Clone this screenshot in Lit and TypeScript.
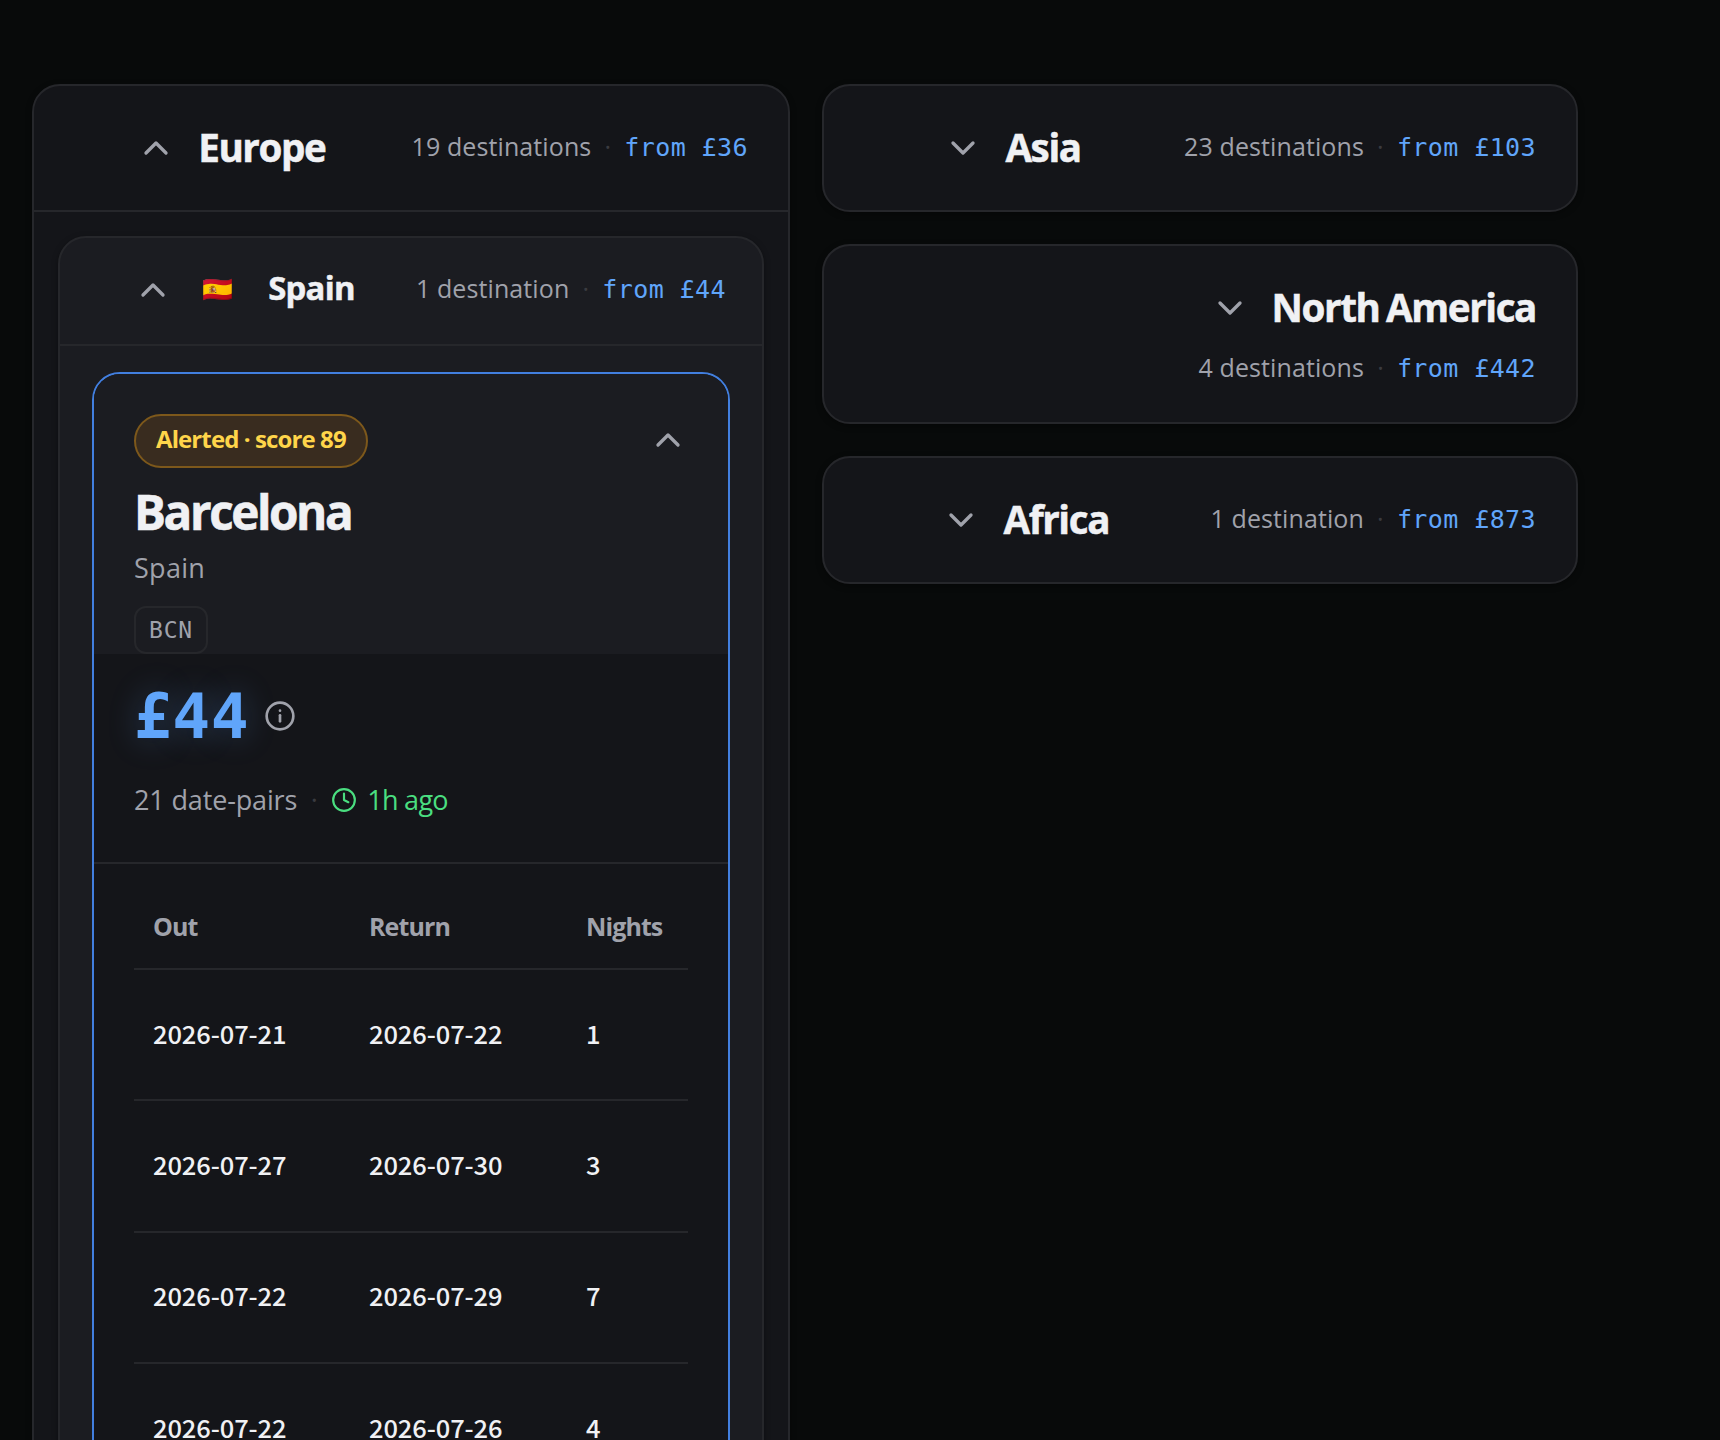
import { LitElement, html, css, svg, nothing } from 'lit';
import { customElement, property } from 'lit/decorators.js';

interface Region {
  name: string;
  count: number;
  from: number;
}

interface DatePair {
  out: string;
  back: string;
  nights: number;
}

const REGIONS: Region[] = [
  { name: 'Asia', count: 23, from: 103 },
  { name: 'North America', count: 4, from: 442 },
  { name: 'Africa', count: 1, from: 873 },
];

const DATE_PAIRS: DatePair[] = [
  { out: '2026-07-21', back: '2026-07-22', nights: 1 },
  { out: '2026-07-27', back: '2026-07-30', nights: 3 },
  { out: '2026-07-22', back: '2026-07-29', nights: 7 },
  { out: '2026-07-22', back: '2026-07-26', nights: 4 },
];

const chevron = (open: boolean) => html`
  <svg class="chevron" viewBox="0 0 24 24" aria-hidden="true">
    ${open ? svg`<path d="m18 15-6-6-6 6" />` : svg`<path d="m6 9 6 6 6-6" />`}
  </svg>
`;

const iconStyles = css`
  svg {
    display: block;
    flex: none;
    fill: none;
    stroke: currentColor;
    stroke-width: 2;
    stroke-linecap: round;
    stroke-linejoin: round;
  }

  .chevron {
    width: 40px;
    height: 40px;
    color: var(--color-text-secondary);
  }
`;

/**
 * Collapsible group header and body
 *
 * @element fare-group
 * @slot - Group content, shown when open
 */
@customElement('fare-group')
export class FareGroup extends LitElement {
  @property() name = '';
  @property() flag = '';
  @property({ type: Number }) count = 0;
  @property({ type: Number }) from = 0;
  @property({ type: Boolean }) open = false;
  @property({ type: Boolean, reflect: true }) nested = false;

  static styles = [
    iconStyles,
    css`
      :host {
        display: block;
        box-sizing: border-box;
        background: var(--color-surface);
        border: 2px solid var(--color-stroke);
        border-radius: 28px;
        box-shadow: 0 2px 6px rgba(0, 0, 0, 0.35);
      }

      :host([nested]) {
        background: var(--color-surface-raised);
      }

      .header {
        display: flex;
        flex-wrap: wrap;
        align-items: center;
        align-content: flex-start;
        gap: 21px 24px;
        min-height: 124px;
        box-sizing: border-box;
        padding: 37px 40px;
      }

      .title,
      .meta {
        display: flex;
        align-items: center;
        margin-left: auto;
        white-space: nowrap;
      }

      .title {
        gap: 22px;
        height: 48px;
      }

      .title .chevron {
        margin-top: 2px;
      }

      h2 {
        margin: 0;
        font-size: 38.6px;
        font-weight: 700;
        line-height: 48px;
        letter-spacing: -1.4px;
        word-spacing: -2px;
        color: var(--color-text-primary);
        -webkit-text-stroke: 0.5px currentColor;
      }

      .flag {
        width: 42px;
        margin: -4px 0 0 7px;
        font-size: 25px;
        line-height: 40px;
      }

      .meta {
        align-items: baseline;
        gap: 12px;
        height: 33px;
        font-size: 25px;
        line-height: 31px;
        color: var(--color-text-secondary);
      }

      .count {
        letter-spacing: 0.1px;
      }

      .dot {
        width: 9px;
        text-align: center;
        color: var(--color-text-faint);
      }

      .from {
        font-family: 'DejaVu Sans Mono', monospace;
        letter-spacing: 0.4px;
        color: var(--color-accent);
      }

      .body {
        padding: 24px 24px 0;
        border-top: 2px solid var(--color-stroke);
      }

      :host([nested]) .header {
        min-height: 106px;
        padding: 28px 36px;
      }

      :host([nested]) .title .chevron {
        margin-top: 0;
      }

      :host([nested]) h2 {
        margin: -4px 0 0 2px;
        font-size: 32.8px;
        letter-spacing: -0.7px;
      }

      :host([nested]) .meta {
        line-height: 29px;
      }

      :host([nested]) .body {
        padding: 26px 32px 0;
      }
    `,
  ];

  render() {
    return html`
      <div class="header">
        <div class="title">
          ${chevron(this.open)}
          ${this.flag ? html`<span class="flag">${this.flag}</span>` : nothing}
          <h2>${this.name}</h2>
        </div>
        <div class="meta">
          <span class="count">${this.count} ${this.count === 1 ? 'destination' : 'destinations'}</span>
          <span class="dot">·</span>
          <span class="from">from £${this.from}</span>
        </div>
      </div>
      ${this.open ? html`<div class="body"><slot></slot></div>` : nothing}
    `;
  }
}

/**
 * Destination card with its date pairs
 *
 * @element fare-card
 */
@customElement('fare-card')
export class FareCard extends LitElement {
  static styles = [
    iconStyles,
    css`
      :host {
        display: block;
        height: 1200px;
        box-sizing: border-box;
        overflow: hidden;
        background: var(--color-surface);
        border: 2px solid var(--color-stroke-active);
        border-radius: 28px;
      }

      .top {
        display: flex;
        justify-content: space-between;
        align-items: flex-start;
        height: 280px;
        box-sizing: border-box;
        padding: 40px 40px 0;
        background: var(--color-surface-raised);
      }

      .top .chevron {
        margin-top: 6px;
      }

      .place {
        display: flex;
        flex-direction: column;
        align-items: flex-start;
      }

      .badge {
        height: 54px;
        box-sizing: border-box;
        padding: 0 20px;
        font-size: 24px;
        font-weight: 700;
        line-height: 46px;
        letter-spacing: -0.9px;
        white-space: nowrap;
        color: #ffd54a;
        background: #392c1f;
        border: 2px solid #7d581b;
        border-radius: 27px;
      }

      h3 {
        margin: 14px 0 0;
        font-size: 47.6px;
        font-weight: 700;
        line-height: 60px;
        letter-spacing: -2.4px;
        color: var(--color-text-primary);
        -webkit-text-stroke: 0.6px currentColor;
      }

      .country {
        font-size: 27px;
        line-height: 36px;
        margin-top: 8px;
        letter-spacing: 0.3px;
        color: var(--color-text-secondary);
      }

      .code {
        height: 48px;
        box-sizing: border-box;
        margin-top: 20px;
        padding: 0 13px;
        font-family: 'DejaVu Sans Mono', monospace;
        font-size: 23px;
        line-height: 44px;
        letter-spacing: 0.8px;
        color: var(--color-text-secondary);
        border: 2px solid var(--color-stroke);
        border-radius: 12px;
      }

      .summary {
        height: 210px;
        box-sizing: border-box;
        padding: 20px 40px 0;
        border-bottom: 2px solid var(--color-stroke);
      }

      .price {
        display: flex;
        align-items: center;
        gap: 15px;
        height: 84px;
        color: var(--color-text-secondary);
      }

      .price strong {
        font-family: 'DejaVu Sans Mono', monospace;
        font-size: 63px;
        letter-spacing: 0.4px;
        line-height: 84px;
        margin-top: 2px;
        color: var(--color-accent);
        text-shadow: 0 0 32px rgba(96, 165, 250, 0.28);
      }

      .price svg {
        width: 32px;
        height: 32px;
      }

      .facts {
        display: flex;
        align-items: center;
        gap: 12px;
        height: 40px;
        margin-top: 22px;
        font-size: 27px;
        line-height: 36px;
        letter-spacing: -0.15px;
        color: var(--color-text-secondary);
      }

      .dot {
        width: 10px;
        text-align: center;
        color: var(--color-text-faint);
      }

      .age {
        display: flex;
        align-items: center;
        gap: 10px;
        letter-spacing: -0.7px;
        color: var(--color-fresh);
      }

      .age svg {
        width: 26px;
        height: 26px;
      }

      .dates {
        padding: 24px 40px;
      }

      table {
        width: 554px;
        table-layout: fixed;
        border-spacing: 0;
      }

      th,
      td {
        padding: 0 17px 0 19px;
        text-align: left;
        border-bottom: 2px solid var(--color-stroke);
      }

      th:first-child {
        width: 180px;
      }

      th:nth-child(2) {
        width: 181px;
      }

      th {
        height: 76px;
        padding-bottom: 4px;
        font-size: 25px;
        font-weight: 700;
        letter-spacing: -0.9px;
        color: var(--color-text-secondary);
      }

      td {
        height: 125.4px;
        padding-bottom: 4px;
        font-family: 'Noto Sans CJK SC', sans-serif;
        font-size: 25.5px;
        font-weight: 500;
        line-height: 40px;
        letter-spacing: -0.1px;
        color: var(--color-text-primary);
      }
    `,
  ];

  render() {
    return html`
      <div class="top">
        <div class="place">
          <span class="badge">Alerted · score 89</span>
          <h3>Barcelona</h3>
          <span class="country">Spain</span>
          <span class="code">BCN</span>
        </div>
        ${chevron(true)}
      </div>
      <div class="summary">
        <div class="price">
          <strong>£44</strong>
          <svg viewBox="0 0 24 24" aria-hidden="true">
            <circle cx="12" cy="12" r="10" />
            <path d="M12 16v-4.5" />
            <path d="M12 8h.01" />
          </svg>
        </div>
        <div class="facts">
          <span>21 date-pairs</span>
          <span class="dot">·</span>
          <span class="age">
            <svg viewBox="0 0 24 24" aria-hidden="true">
              <circle cx="12" cy="12" r="10" />
              <path d="M12 6v6l4 2" />
            </svg>
            <span>1h ago</span>
          </span>
        </div>
      </div>
      <div class="dates">
        <table>
          <thead>
            <tr><th>Out</th><th>Return</th><th>Nights</th></tr>
          </thead>
          <tbody>
            ${DATE_PAIRS.map((pair) => html`
              <tr><td>${pair.out}</td><td>${pair.back}</td><td>${pair.nights}</td></tr>
            `)}
          </tbody>
        </table>
      </div>
    `;
  }
}

@customElement('app-root')
export class AppRoot extends LitElement {
  static styles = css`
    :host {
      --color-surface: #141519;
      --color-surface-raised: #1b1c21;
      --color-stroke: #26272b;
      --color-stroke-active: #427fdf;
      --color-text-primary: #f0f1f4;
      --color-text-secondary: #a0a2ab;
      --color-text-faint: #3a3b40;
      --color-accent: #60a5fa;
      --color-fresh: #4ade80;

      display: block;
      height: 1440px;
      box-sizing: border-box;
      overflow: hidden;
      padding: 84px 142px 0 32px;
      background: #080a0a;
      font-family: 'Open Sans', 'Noto Sans', sans-serif;
    }

    .columns {
      display: grid;
      grid-template-columns: 758px 756px;
      gap: 32px;
      align-items: start;
    }

    .stack {
      display: flex;
      flex-direction: column;
      gap: 32px;
    }
  `;

  render() {
    return html`
      <div class="columns">
        <fare-group name="Europe" count="19" from="36" open>
          <fare-group name="Spain" flag="🇪🇸" count="1" from="44" open nested>
            <fare-card></fare-card>
          </fare-group>
        </fare-group>
        <div class="stack">
          ${REGIONS.map((region) => html`
            <fare-group name=${region.name} count=${region.count} from=${region.from}></fare-group>
          `)}
        </div>
      </div>
    `;
  }
}

declare global {
  interface HTMLElementTagNameMap {
    'app-root': AppRoot;
    'fare-group': FareGroup;
    'fare-card': FareCard;
  }
}
